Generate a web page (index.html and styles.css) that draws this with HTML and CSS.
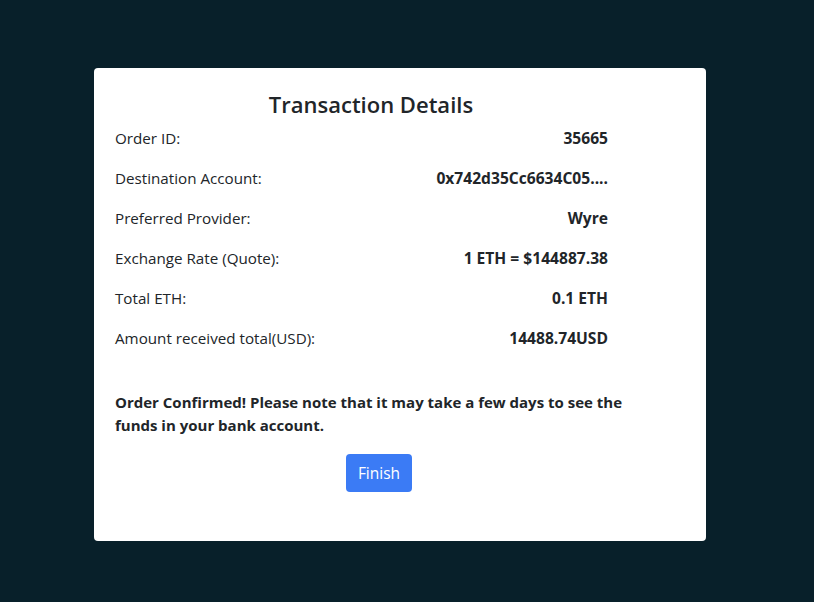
FILE: index.html
```html
<!DOCTYPE html>
<html>
<head>
<meta charset="utf-8">
<link rel="stylesheet" href="styles.css">
</head>
<body>
<div class="card">
  <div class="inner">
    <h2 class="title">Transaction Details</h2>
    <div class="row"><span class="label">Order ID:</span><span class="value">35665</span></div>
    <div class="row"><span class="label">Destination Account:</span><span class="value">0x742d35Cc6634C05....</span></div>
    <div class="row"><span class="label">Preferred Provider:</span><span class="value">Wyre</span></div>
    <div class="row"><span class="label">Exchange Rate (Quote):</span><span class="value">1 ETH = $144887.38</span></div>
    <div class="row"><span class="label">Total ETH:</span><span class="value">0.1 ETH</span></div>
    <div class="row"><span class="label">Amount received total(USD):</span><span class="value">14488.74USD</span></div>
    <p class="note">Order Confirmed! Please note that it may take a few days to see the funds in your bank account.</p>
    <div class="actions"><button class="btn">Finish</button></div>
  </div>
</div>
</body>
</html>
```
FILE: styles.css
```css
html, body {
  margin: 0;
  padding: 0;
}
body {
  background: #08202a;
  height: 602px;
  font-family: "Open Sans", "Noto Sans", sans-serif;
  color: #212529;
  padding-top: 68px;
  padding-left: 94px;
  box-sizing: border-box;
}
.card {
  width: 612px;
  height: 473px;
  background: #fff;
  border-radius: 4px;
  padding: 23px 21px 0 21px;
  box-sizing: border-box;
}
.inner {
  width: 512px;
}
.title {
  margin: 0;
  font-size: 22px;
  font-weight: 600;
  line-height: 27px;
  text-align: center;
}
.row {
  display: flex;
  justify-content: space-between;
  align-items: center;
  height: 40px;
  padding-right: 19px;
}
.label {
  font-size: 15.2px;
  font-weight: 400;
}
.value {
  font-size: 15.6px;
  font-weight: 700;
}
.note {
  margin: 33px 0 0 0;
  font-size: 15px;
  font-weight: 700;
  line-height: 23px;
}
.actions {
  margin-top: 17px;
  padding-left: 231px;
}
.btn {
  background: #3b7bf5;
  color: #fff;
  border: none;
  border-radius: 4px;
  font-family: inherit;
  font-size: 15.5px;
  height: 38px;
  width: 66px;
  padding: 0;
}
```
